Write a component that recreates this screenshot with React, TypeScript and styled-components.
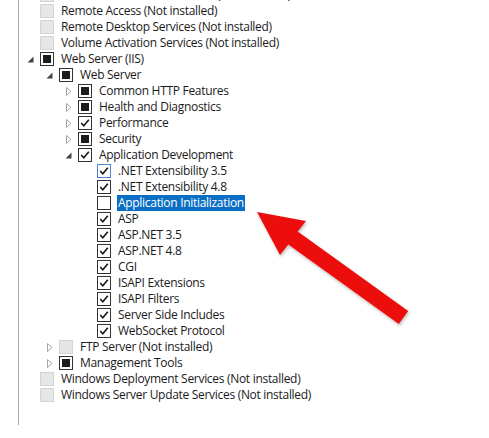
import React from "react";
import styled, { createGlobalStyle } from "styled-components";

const GlobalStyle = createGlobalStyle`
  html, body {
    margin: 0;
    padding: 0;
    background: #ffffff;
    overflow: hidden;
  }
`;

type CheckState = "checked" | "unchecked" | "mixed" | "unavailable";
type Expand = "open" | "closed" | "none";

interface Feature {
  label: string;
  level: number;
  state: CheckState;
  expand: Expand;
  focused?: boolean;
  selected?: boolean;
}

const features: Feature[] = [
  { label: "Print and Document Services (Not installed)", level: 0, state: "unavailable", expand: "none" },
  { label: "Remote Access (Not installed)", level: 0, state: "unavailable", expand: "none" },
  { label: "Remote Desktop Services (Not installed)", level: 0, state: "unavailable", expand: "none" },
  { label: "Volume Activation Services (Not installed)", level: 0, state: "unavailable", expand: "none" },
  { label: "Web Server (IIS)", level: 0, state: "mixed", expand: "open" },
  { label: "Web Server", level: 1, state: "mixed", expand: "open" },
  { label: "Common HTTP Features", level: 2, state: "mixed", expand: "closed" },
  { label: "Health and Diagnostics", level: 2, state: "mixed", expand: "closed" },
  { label: "Performance", level: 2, state: "checked", expand: "closed" },
  { label: "Security", level: 2, state: "mixed", expand: "closed" },
  { label: "Application Development", level: 2, state: "checked", expand: "open" },
  { label: ".NET Extensibility 3.5", level: 3, state: "checked", expand: "none", focused: true },
  { label: ".NET Extensibility 4.8", level: 3, state: "checked", expand: "none" },
  { label: "Application Initialization", level: 3, state: "unchecked", expand: "none", selected: true },
  { label: "ASP", level: 3, state: "checked", expand: "none" },
  { label: "ASP.NET 3.5", level: 3, state: "checked", expand: "none" },
  { label: "ASP.NET 4.8", level: 3, state: "checked", expand: "none" },
  { label: "CGI", level: 3, state: "checked", expand: "none" },
  { label: "ISAPI Extensions", level: 3, state: "checked", expand: "none" },
  { label: "ISAPI Filters", level: 3, state: "checked", expand: "none" },
  { label: "Server Side Includes", level: 3, state: "checked", expand: "none" },
  { label: "WebSocket Protocol", level: 3, state: "checked", expand: "none" },
  { label: "FTP Server (Not installed)", level: 1, state: "unavailable", expand: "closed" },
  { label: "Management Tools", level: 1, state: "mixed", expand: "closed" },
  { label: "Windows Deployment Services (Not installed)", level: 0, state: "unavailable", expand: "none" },
  { label: "Windows Server Update Services (Not installed)", level: 0, state: "unavailable", expand: "none" },
];

const Page = styled.div`
  position: relative;
  width: 489px;
  height: 438px;
  padding-left: 18px;
  box-sizing: border-box;
  overflow: hidden;
  font-family: "Open Sans", "Noto Sans", "Liberation Sans", sans-serif;
  font-size: 12px;
  color: #1a1a1a;
`;

const Panel = styled.div`
  height: 100%;
  border-left: 1px solid #a6a6a6;
`;

const Tree = styled.ul`
  list-style: none;
  margin: -13px 0 0 0;
  padding: 0;
`;

const Row = styled.li<{ $level: number }>`
  display: flex;
  align-items: center;
  height: 16px;
  padding-left: ${(p) => 2 + p.$level * 19}px;
`;

const ExpanderSlot = styled.span`
  display: flex;
  align-items: center;
  justify-content: center;
  width: 19px;
  height: 16px;
  flex: none;
`;

const Box = styled.span<{ $state: CheckState; $focused?: boolean }>`
  position: relative;
  display: flex;
  align-items: center;
  justify-content: center;
  box-sizing: border-box;
  width: 14px;
  height: 14px;
  flex: none;
  border: 1px solid
    ${(p) =>
      p.$focused ? "#4a86c8" : p.$state === "unavailable" ? "#d4d4d4" : "#333333"};
  background: ${(p) => (p.$state === "unavailable" ? "#e6e6e6" : "#ffffff")};
`;

const MixedFill = styled.span`
  width: 8px;
  height: 8px;
  background: #1c1c1c;
`;

const Label = styled.span<{ $selected?: boolean }>`
  margin-left: 6px;
  padding: 0 1px 1px 1px;
  line-height: 15px;
  white-space: nowrap;
  letter-spacing: -0.3px;
  background: ${(p) => (p.$selected ? "#0a6fc4" : "transparent")};
  color: ${(p) => (p.$selected ? "#ffffff" : "#1a1a1a")};
`;

const Overlay = styled.svg`
  position: absolute;
  left: 0;
  top: 0;
  pointer-events: none;
`;

const Expander = ({ kind }: { kind: Expand }) => {
  if (kind === "open") {
    return (
      <svg width="7" height="7" viewBox="0 0 7 7">
        <polygon points="6.5,0.5 6.5,6.5 0.5,6.5" fill="#444444" />
      </svg>
    );
  }
  if (kind === "closed") {
    return (
      <svg width="6" height="9" viewBox="0 0 6 9">
        <polygon points="0.5,0.5 5,4.5 0.5,8.5" fill="none" stroke="#a6a6a6" strokeWidth="1" />
      </svg>
    );
  }
  return null;
};

const CheckBox = ({ state, focused }: { state: CheckState; focused?: boolean }) => (
  <Box $state={state} $focused={focused}>
    {state === "checked" && (
      <svg width="12" height="12" viewBox="0 0 12 12">
        <polyline
          points="2.2,6 4.8,8.8 9.8,2.8"
          fill="none"
          stroke="#1c1c1c"
          strokeWidth="1.7"
        />
      </svg>
    )}
    {state === "mixed" && <MixedFill />}
  </Box>
);

const RedArrow = () => (
  <Overlay width="489" height="438" viewBox="0 0 489 438">
    <defs>
      <filter id="shade" x="-20%" y="-20%" width="140%" height="140%">
        <feDropShadow dx="1" dy="2" stdDeviation="1.5" floodColor="#000" floodOpacity="0.25" />
      </filter>
    </defs>
    <polygon
      points="257,212 306,221 297.7,231.5 408.2,311 398.8,324 288.3,244.5 280,255"
      fill="#ec0b0b"
      filter="url(#shade)"
    />
  </Overlay>
);

const App = () => {
  return (
    <>
      <GlobalStyle />
      <Page>
        <Panel>
          <Tree>
            {features.map((f) => (
              <Row key={f.label} $level={f.level}>
                <ExpanderSlot>
                  <Expander kind={f.expand} />
                </ExpanderSlot>
                <CheckBox state={f.state} focused={f.focused} />
                <Label $selected={f.selected}>{f.label}</Label>
              </Row>
            ))}
          </Tree>
        </Panel>
        <RedArrow />
      </Page>
    </>
  );
};

export default App;
